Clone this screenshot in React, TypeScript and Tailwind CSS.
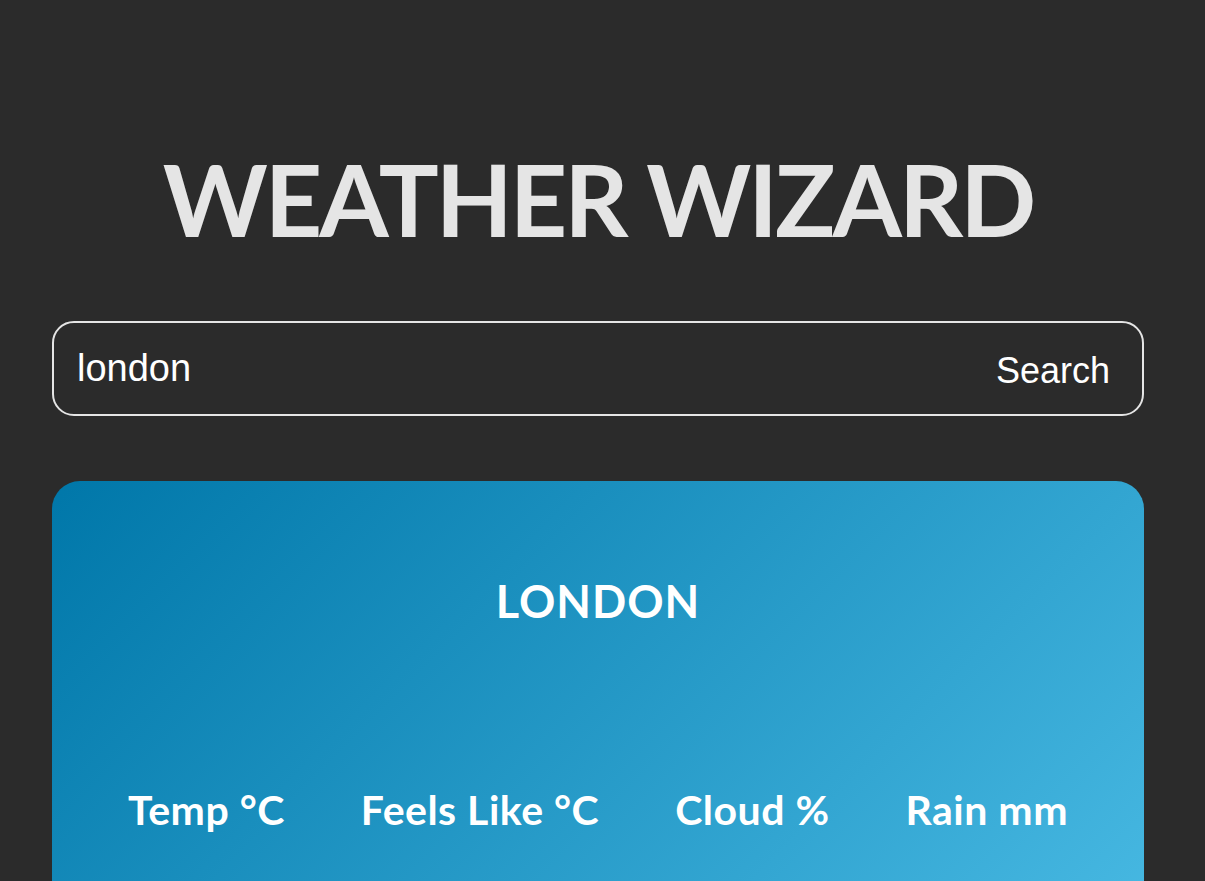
import { useState } from "react";

const labels = ["Temp °C", "Feels Like °C", "Cloud %", "Rain mm"];

export default function App() {
  const [city, setCity] = useState("london");

  return (
    <div className="min-h-screen bg-[#2b2b2b] font-['Lato',sans-serif] overflow-hidden">
      <div className="ml-[52px] w-[1092px] pt-[138px]">
        <h1 className="text-center text-[100px] font-bold leading-[1.2] text-[#e5e5e5] tracking-[-3px]">
          WEATHER WIZARD
        </h1>

        <form
          className="mt-[63px] h-[95px] flex items-center justify-between rounded-[22px] border-2 border-[#e5e5e5] pl-[23px] pr-[32px]"
          onSubmit={(e) => e.preventDefault()}
        >
          <input
            value={city}
            onChange={(e) => setCity(e.target.value)}
            className="flex-1 bg-transparent text-[38px] text-white outline-none font-['Liberation_Sans',Arial,sans-serif]"
          />
          <button
            type="submit"
            className="text-[36px] text-white font-['Liberation_Sans',Arial,sans-serif] pt-[4px]"
          >
            Search
          </button>
        </form>

        <div className="mt-[65px] rounded-[28px] bg-[linear-gradient(135deg,#0077a9,#4cbde6)] pt-[98px] pb-[200px] text-white">
          <h2 className="text-center text-[45px] font-bold leading-none tracking-[1px]">
            {city.toUpperCase()}
          </h2>
          <div className="mt-[165px] flex justify-evenly">
            {labels.map((label) => (
              <span key={label} className="text-[41px] font-bold leading-none tracking-[0.5px]">
                {label}
              </span>
            ))}
          </div>
        </div>
      </div>
    </div>
  );
}
